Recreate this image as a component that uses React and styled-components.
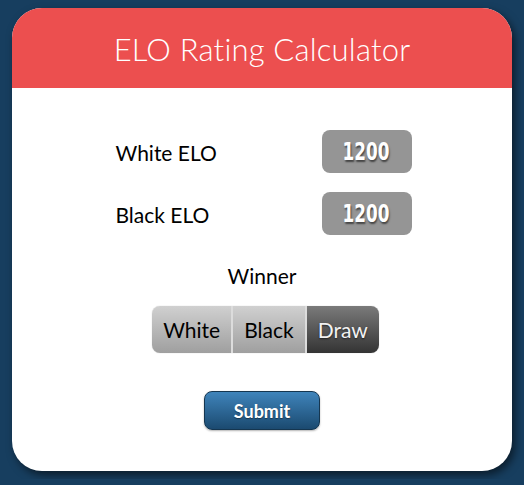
import React from 'react';
import styled, { createGlobalStyle } from 'styled-components';

const GlobalStyle = createGlobalStyle`
  html, body {
    margin: 0;
    background: #173e5f;
  }
  body {
    padding: 8px 12px;
    font-family: Lato, "Open Sans", sans-serif;
  }
`;

function App() {
  return (
    <>
      <GlobalStyle />
      <Card>
        <Header>ELO Rating Calculator</Header>
        <Body>
          <Row>
            <Label>White ELO</Label>
            <Score><ScoreText>1200</ScoreText></Score>
          </Row>
          <Row>
            <Label>Black ELO</Label>
            <Score><ScoreText>1200</ScoreText></Score>
          </Row>
          <Winner>Winner</Winner>
          <Segments>
            <Segment>White</Segment>
            <Segment>Black</Segment>
            <Segment active>Draw</Segment>
          </Segments>
          <Submit>Submit</Submit>
        </Body>
      </Card>
    </>
  );
}

export default App;

const Card = styled.div`
  width: 500px;
  height: 463px;
  background: #fff;
  border-radius: 30px;
  overflow: hidden;
  box-shadow: 3px 4px 8px rgba(0, 0, 0, 0.55);
  display: flex;
  flex-direction: column;
`;

const Header = styled.div`
  height: 80px;
  background: #ec4f4f;
  color: #fff;
  display: flex;
  align-items: center;
  justify-content: center;
  font-family: Lato, sans-serif;
  font-weight: 300;
  font-size: 31px;
  letter-spacing: 0.2px;
  padding-top: 2px;
  box-sizing: border-box;
`;

const Body = styled.div`
  display: flex;
  flex-direction: column;
  align-items: center;
  padding-top: 42px;
`;

const Row = styled.div`
  width: 296px;
  margin-left: 3px;
  height: 43px;
  display: flex;
  align-items: center;
  justify-content: space-between;
  margin-bottom: 19px;
`;

const Label = styled.div`
  font-size: 21px;
  color: #000;
  padding-top: 2px;
`;

const Score = styled.div`
  width: 90px;
  height: 43px;
  border-radius: 8px;
  background: #959595;
  display: flex;
  align-items: center;
  justify-content: center;
`;

const ScoreText = styled.span`
  display: inline-block;
  color: #fff;
  font-family: "DejaVu Sans Condensed", "DejaVu Sans", sans-serif;
  font-weight: bold;
  font-size: 24px;
  transform: scaleX(0.78);
  text-shadow: 1px 2px 2px rgba(0, 0, 0, 0.55);
`;

const Winner = styled.div`
  font-size: 21px;
  color: #000;
  margin-top: 9px;
`;

const Segments = styled.div`
  display: flex;
  margin-top: 18px;
  margin-left: 7px;
  height: 47px;
  border-radius: 8px;
  overflow: hidden;
  box-shadow: 0 0 1px rgba(0, 0, 0, 0.3);
`;

const Segment = styled.div`
  display: flex;
  align-items: center;
  justify-content: center;
  padding: 0 11px 0 11px;
  font-size: 21px;
  color: ${p => (p.active ? '#f2f2f2' : '#000')};
  background: ${p =>
    p.active
      ? 'linear-gradient(#7a7a7a, #343434)'
      : 'linear-gradient(#d0d0d0, #9f9f9f)'};
  text-shadow: ${p => (p.active ? '0 1px 2px rgba(0,0,0,0.6)' : 'none')};
  & + & {
    border-left: 2px solid #dcdcdc;
  }
`;

const Submit = styled.button`
  margin-top: 38px;
  width: 116px;
  height: 39px;
  border-radius: 8px;
  border: 1px solid #153650;
  background: linear-gradient(#3f84bb, #1b4a70);
  color: #fff;
  font-family: Lato, sans-serif;
  font-weight: bold;
  font-size: 18px;
  text-shadow: 0 1px 1px rgba(0, 0, 0, 0.4);
  box-shadow: 0 1px 2px rgba(0, 0, 0, 0.3);
`;
